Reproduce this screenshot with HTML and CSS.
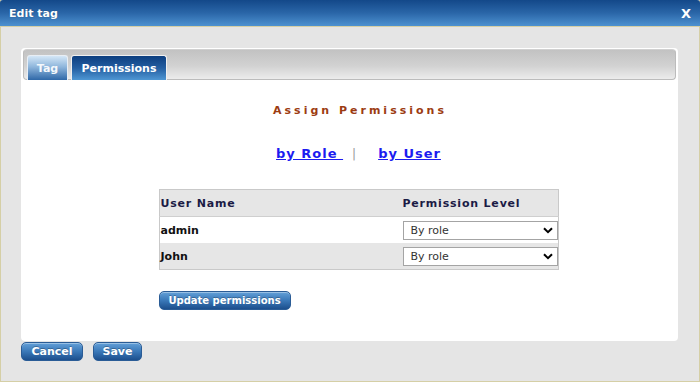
FILE: index.html
```html
<!DOCTYPE html>
<html>
<head>
<meta charset="utf-8">
<link rel="stylesheet" href="styles.css">
</head>
<body>
<div class="window">
  <div class="titlebar">
    <span class="title">Edit tag</span>
    <span class="close">X</span>
  </div>
  <div class="body">
    <div class="panel">
      <div class="tabstrip">
        <div class="tab tab-inactive">Tag</div>
        <div class="tab tab-active">Permissions</div>
      </div>
      <div class="content">
        <div class="heading">Assign Permissions</div>
        <div class="links">
          <a class="link" href="#">by Role&nbsp;</a>
          <span class="sep">|</span>
          <a class="link" href="#">by User</a>
        </div>
        <div class="tablewrap">
          <table class="perm">
            <tr class="head">
              <th class="c1">User Name</th>
              <th class="c2">Permission Level</th>
            </tr>
            <tr class="row odd">
              <td class="c1">admin</td>
              <td class="c2"><div class="select"><span>By role</span><svg width="10" height="7" viewBox="0 0 10 7"><path d="M1 1.2 L5 5.2 L9 1.2" fill="none" stroke="#000" stroke-width="2"/></svg></div></td>
            </tr>
            <tr class="row even">
              <td class="c1">John</td>
              <td class="c2"><div class="select"><span>By role</span><svg width="10" height="7" viewBox="0 0 10 7"><path d="M1 1.2 L5 5.2 L9 1.2" fill="none" stroke="#000" stroke-width="2"/></svg></div></td>
            </tr>
          </table>
          <div class="btnrow"><button class="btn">Update permissions</button></div>
        </div>
      </div>
    </div>
    <div class="footer">
      <button class="btn btn-cancel">Cancel</button>
      <button class="btn btn-save">Save</button>
    </div>
  </div>
</div>
</body>
</html>
```
FILE: styles.css
```css
html, body {
  margin: 0;
  padding: 0;
}
body {
  font-family: "DejaVu Sans", Verdana, sans-serif;
  font-size: 11px;
  background: #e5e5e5;
}
.window {
  width: 700px;
  height: 382px;
  box-sizing: border-box;
  border: 1px solid #d5cfa6;
  border-top: none;
  background: #e5e5e5;
  display: flex;
  flex-direction: column;
}
.titlebar {
  height: 26px;
  margin: 0 -1px;
  border-radius: 3px 3px 0 0;
  background: linear-gradient(to bottom, #134889 0%, #2a66a8 50%, #4d91d0 100%);
  border-bottom: 1px solid #d5cfa6;
  display: flex;
  align-items: center;
  justify-content: space-between;
  padding: 0 9px 0 9px;
  color: #fff;
  font-weight: bold;
  flex: none;
}
.title {
  font-size: 11px;
  text-shadow: 0 0 1px rgba(0,0,0,0.3);
  margin-top: 1px;
}
.close {
  font-size: 13px;
  font-weight: bold;
}
.body {
  padding: 21px 21px 0 20px;
}
.panel {
  background: #fff;
  height: 293px;
  box-sizing: border-box;
  border-radius: 4px;
  padding: 1px 2px 0 2px;
  display: flex;
  flex-direction: column;
}
.tabstrip {
  height: 31px;
  box-sizing: border-box;
  border: 1px solid #bcbcbc;
  border-top-color: #d0d0d0;
  border-radius: 4px;
  background: linear-gradient(to bottom, #c2c2c2 0%, #d2d2d2 55%, #ececec 100%);
  display: flex;
  align-items: flex-end;
  padding-left: 3px;
  gap: 3px;
}
.tab {
  height: 25px;
  box-sizing: border-box;
  border-radius: 3px 3px 0 0;
  color: #fff;
  font-weight: bold;
  font-size: 11px;
  display: flex;
  align-items: center;
  justify-content: center;
  margin-bottom: -1px;
}
.tab-inactive {
  width: 41px;
  background: linear-gradient(to bottom, #d4e7f7 0%, #8fb6dc 45%, #2f68a8 100%);
  border: 1px solid #e8eef5;
  border-bottom: none;
  color: #f4f8fc;
}
.tab-active {
  width: 96px;
  background: linear-gradient(to bottom, #0c3e7f 0%, #235ea1 50%, #4e96d3 100%);
  border: 1px solid #f0f0f0;
  border-bottom: none;
}
.content {
  padding-left: 18px;
  display: flex;
  flex-direction: column;
  align-items: center;
}
.heading {
  margin-top: 24px;
  line-height: 13px;
  font-weight: bold;
  font-size: 11px;
  letter-spacing: 3px;
  color: #9c3c12;
  margin-right: -3px;
}
.links {
  margin-top: 29px;
  line-height: 16px;
  font-size: 13px;
  font-weight: bold;
  letter-spacing: 1px;
  display: flex;
  align-items: center;
}
.link {
  color: #1c1cf0;
  text-decoration: underline;
}
.sep {
  color: #999;
  font-weight: normal;
  font-size: 12px;
  margin: 0 21px 0 9px;
}
.tablewrap {
  margin-top: 27px;
  width: 400px;
}
.perm {
  width: 400px;
  border-collapse: collapse;
  border: 1px solid #c9c9c9;
}
.perm th, .perm td {
  padding: 0 0 0 1px;
  text-align: left;
  font-weight: bold;
  font-size: 11px;
}
.perm th {
  height: 26px;
  color: #1b1b45;
  letter-spacing: 0.8px;
  background: #e6e6e6;
  border-bottom: 1px solid #cfcfcf;
}
.perm .c1 { width: 242px; }
.perm td { height: 26px; color: #111; }
.row.even td { background: #e6e6e6; }
.select {
  width: 155px;
  height: 19px;
  box-sizing: border-box;
  border: 1px solid #a4a4a4;
  background: #fff;
  display: flex;
  align-items: center;
  justify-content: space-between;
  padding: 0 4px 0 7px;
  font-weight: normal;
  color: #333;
  font-size: 11px;
  letter-spacing: 0;
}
.btnrow {
  margin-top: 21px;
}
.btn {
  font-family: "DejaVu Sans", Verdana, sans-serif;
  font-weight: bold;
  font-size: 10px;
  color: #fff;
  height: 19px;
  padding: 0;
  border: 1px solid #2a5c96;
  border-radius: 5px;
  background: linear-gradient(to bottom, #63a0d8 0%, #3a78b8 50%, #1c4f8d 100%);
  box-shadow: inset 0 1px 0 rgba(255,255,255,0.35);
  text-shadow: 0 -1px 0 rgba(0,0,0,0.25);
  cursor: pointer;
}
.btnrow .btn { width: 132px; }
.footer {
  margin-top: 1px;
  display: flex;
  gap: 10px;
}
.btn-cancel { width: 62px; font-size: 11px; }
.btn-save { width: 49px; font-size: 11px; }
```
